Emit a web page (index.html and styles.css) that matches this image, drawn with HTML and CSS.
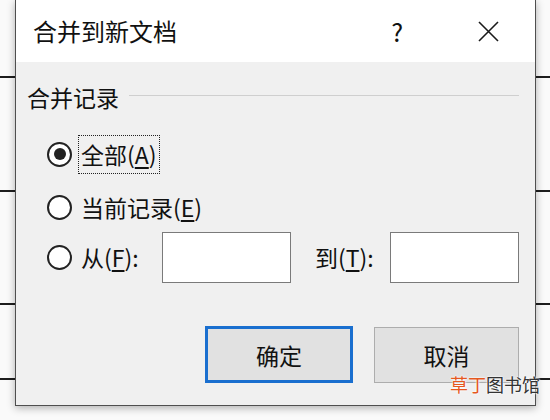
FILE: index.html
```html
<!DOCTYPE html>
<html lang="zh-CN">
<head>
    <meta charset="UTF-8">
    <title>合并到新文档</title>
    <link rel="stylesheet" href="styles.css">
</head>
<body>
    <div class="dialog">
        <div class="titlebar">
            <span class="title">合并到新文档</span>
            <span class="help">?</span>
            <svg class="close" width="21" height="21" viewBox="0 0 21 21">
                <path d="M1 1 L20 20 M20 1 L1 20" stroke="#1a1a1a" stroke-width="1.6" fill="none"/>
            </svg>
        </div>
        <div class="content">
            <div class="group-head">
                <span class="group-label">合并记录</span>
                <span class="group-line"></span>
            </div>
            <div class="row first">
                <span class="radio checked"></span>
                <span class="label focused">全部(<u>A</u>)</span>
            </div>
            <div class="row">
                <span class="radio"></span>
                <span class="label">当前记录(<u>E</u>)</span>
            </div>
            <div class="row range">
                <span class="radio"></span>
                <span class="label from">从(<u>F</u>):</span>
                <span class="field"></span>
                <span class="label to">到(<u>T</u>):</span>
                <span class="field"></span>
            </div>
            <div class="buttons">
                <button class="btn primary">确定</button>
                <button class="btn">取消</button>
            </div>
        </div>
    </div>
    <div class="watermark"><span class="wm-red">草丁</span>图书馆</div>
</body>
</html>
```

FILE: styles.css
```css
* {
    box-sizing: border-box;
    margin: 0;
    padding: 0;
}
body {
    width: 550px;
    height: 420px;
    overflow: hidden;
    position: relative;
    font-family: "Noto Sans CJK SC", "Noto Sans", sans-serif;
    color: #111;
    background:
        linear-gradient(#1e1e1e, #1e1e1e) 0 76px / 100% 2px no-repeat,
        linear-gradient(#1e1e1e, #1e1e1e) 0 190px / 100% 2px no-repeat,
        linear-gradient(#1e1e1e, #1e1e1e) 0 303px / 100% 2px no-repeat,
        linear-gradient(#1e1e1e, #1e1e1e) 0 378px / 100% 2px no-repeat,
        #fafafa;
}
.dialog {
    width: 521px;
    height: 406px;
    margin-left: 15px;
    border: 1px solid #4f4f4f;
    border-top: none;
    display: flex;
    flex-direction: column;
    box-shadow: 0 2px 8px rgba(0, 0, 0, 0.3);
}
.titlebar {
    height: 62px;
    background: #fff;
    display: flex;
    align-items: center;
    padding-left: 17px;
}
.title {
    flex: 1;
    font-size: 24px;
    line-height: 1;
}
.help {
    font-size: 25px;
    line-height: 1;
    margin-right: 75px;
}
.close {
    margin-right: 36px;
}
.content {
    flex: 1;
    background: #f0f0f0;
    padding: 0 16px 22px 11px;
    display: flex;
    flex-direction: column;
}
.group-head {
    height: 30px;
    margin-top: 20px;
    display: flex;
    align-items: center;
}
.group-label {
    font-size: 23px;
    line-height: 1;
}
.group-line {
    flex: 1;
    height: 1px;
    background: #cfcfcf;
    margin: 0 0 0 10px;
    position: relative;
    top: -2px;
}
.row {
    display: flex;
    align-items: center;
    height: 40px;
    margin-top: 13px;
    padding-left: 20px;
}
.row.first {
    margin-top: 22px;
}
.row.range {
    height: 51px;
    margin-top: 5px;
}
.radio {
    width: 25px;
    height: 25px;
    border: 2px solid #222;
    border-radius: 50%;
    background: #fff;
    display: flex;
    align-items: center;
    justify-content: center;
    flex-shrink: 0;
}
.radio.checked::after {
    content: "";
    width: 12px;
    height: 12px;
    border-radius: 50%;
    background: #222;
}
.label {
    font-size: 23px;
    line-height: 37px;
    height: 39px;
    padding: 0 2px;
    margin-left: 6px;
    border: 1px dotted transparent;
    white-space: nowrap;
}
.label u {
    text-underline-offset: 3px;
}
.label.focused {
    border-color: #222;
}
.label.from {
    width: 85px;
}
.label.to {
    width: 79px;
    margin-left: 21px;
}
.field {
    width: 131px;
    height: 51px;
    background: #fff;
    border: 1px solid #7a7a7a;
}
.buttons {
    margin-top: auto;
    display: flex;
    justify-content: flex-end;
    align-items: flex-end;
    gap: 21px;
}
.btn {
    width: 145px;
    height: 56px;
    background: #e1e1e1;
    border: 1px solid #adadad;
    font-family: inherit;
    font-size: 23px;
    color: #111;
}
.btn.primary {
    width: 148px;
    height: 57px;
    border: 3px solid #1a6fcf;
}
.watermark {
    position: absolute;
    left: 450px;
    top: 373px;
    font-size: 18px;
    line-height: 22px;
    color: #333;
    text-shadow: 0 0 2px #fff, 0 0 2px #fff;
}
.wm-red {
    color: #e5581f;
}
```
